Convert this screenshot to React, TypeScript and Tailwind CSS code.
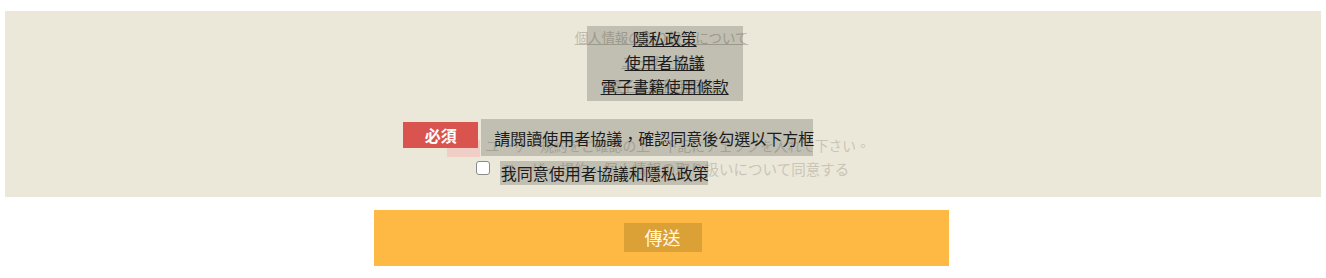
import React from 'react';

const font = { fontFamily: '"Noto Sans CJK TC", "Noto Sans CJK JP", sans-serif' };

const App = () => {
  return (
    <div className="w-[1326px] h-[278px] bg-white" style={font}>
      {/* agreement panel */}
      <div className="mx-[5px] mt-[11px] h-[186px] bg-[#ece8d9] pt-[14px] flex flex-col items-center">
        {/* policy links */}
        <div className="relative ml-[-3px] flex flex-col items-center text-[13.4px] leading-[24px] text-[#bfbbac]">
          <a className="underline whitespace-nowrap">個人情報の取り扱いについて</a>
          <a className="underline whitespace-nowrap">ユーザー規約</a>
          <a className="underline whitespace-nowrap">電子書籍利用規約</a>

          <div className="absolute left-[12px] top-[1px] w-[156px] h-[75px] bg-black/[0.18] flex flex-col items-center text-[16px] leading-[24px] text-[#1c1c1c]">
            <span className="underline">隱私政策</span>
            <span className="underline">使用者協議</span>
            <span className="underline">電子書籍使用條款</span>
          </div>
        </div>

        {/* notice row */}
        <div className="relative mt-[37px] ml-[-9px] flex items-center h-[22px] text-[13.75px] text-[#c9c5b6] whitespace-nowrap">
          <span className="w-[33px] h-[17px] mt-[6px] bg-[#f0cec7] text-[#f0cec7] text-[12px] font-bold flex items-center justify-center mr-[5px]">必須</span>
          <span>ユーザー規約をご確認の上、下記にチェックを入れて下さい。</span>

          <div className="absolute left-[-44px] top-[-12px] w-[75px] h-[26px] bg-[#d9534f] text-white text-[16px] font-bold flex items-center justify-center">
            必須
          </div>
          <div className="absolute left-[34px] top-[-15px] w-[332px] h-[37px] bg-black/[0.18] pl-[13px] flex items-center text-[16px] text-[#1c1c1c]">
            請閱讀使用者協議，確認同意後勾選以下方框
          </div>
        </div>

        {/* consent row */}
        <label className="relative mt-[2px] ml-[-1px] flex items-center h-[22px] text-[14.5px] text-[#c9c5b6] whitespace-nowrap">
          <input type="checkbox" className="w-[14px] h-[14px] mr-[12px] mt-[-3px] rounded-[3px] appearance-none bg-white border border-[#8a8a8a]" />
          <span>ユーザー規約、個人情報の取り扱いについて同意する</span>

          <div className="absolute left-[24px] top-[3px] w-[208px] h-[24px] bg-black/[0.18] pl-[1px] flex items-center text-[16px] text-[#1c1c1c]">
            我同意使用者協議和隱私政策
          </div>
        </label>
      </div>

      {/* submit */}
      <div className="flex justify-center mt-[13px]">
        <button className="relative ml-[-4px] w-[575px] h-[56px] bg-[#fdb943] flex items-center justify-center text-white text-[17px]">
          <span className="opacity-0">送信</span>
          <span className="absolute left-[250px] top-[13px] w-[78px] h-[29px] bg-[#dba036] flex items-center justify-center text-[18px] text-[#fff8ee]">
            傳送
          </span>
        </button>
      </div>
    </div>
  );
};

export default App;
